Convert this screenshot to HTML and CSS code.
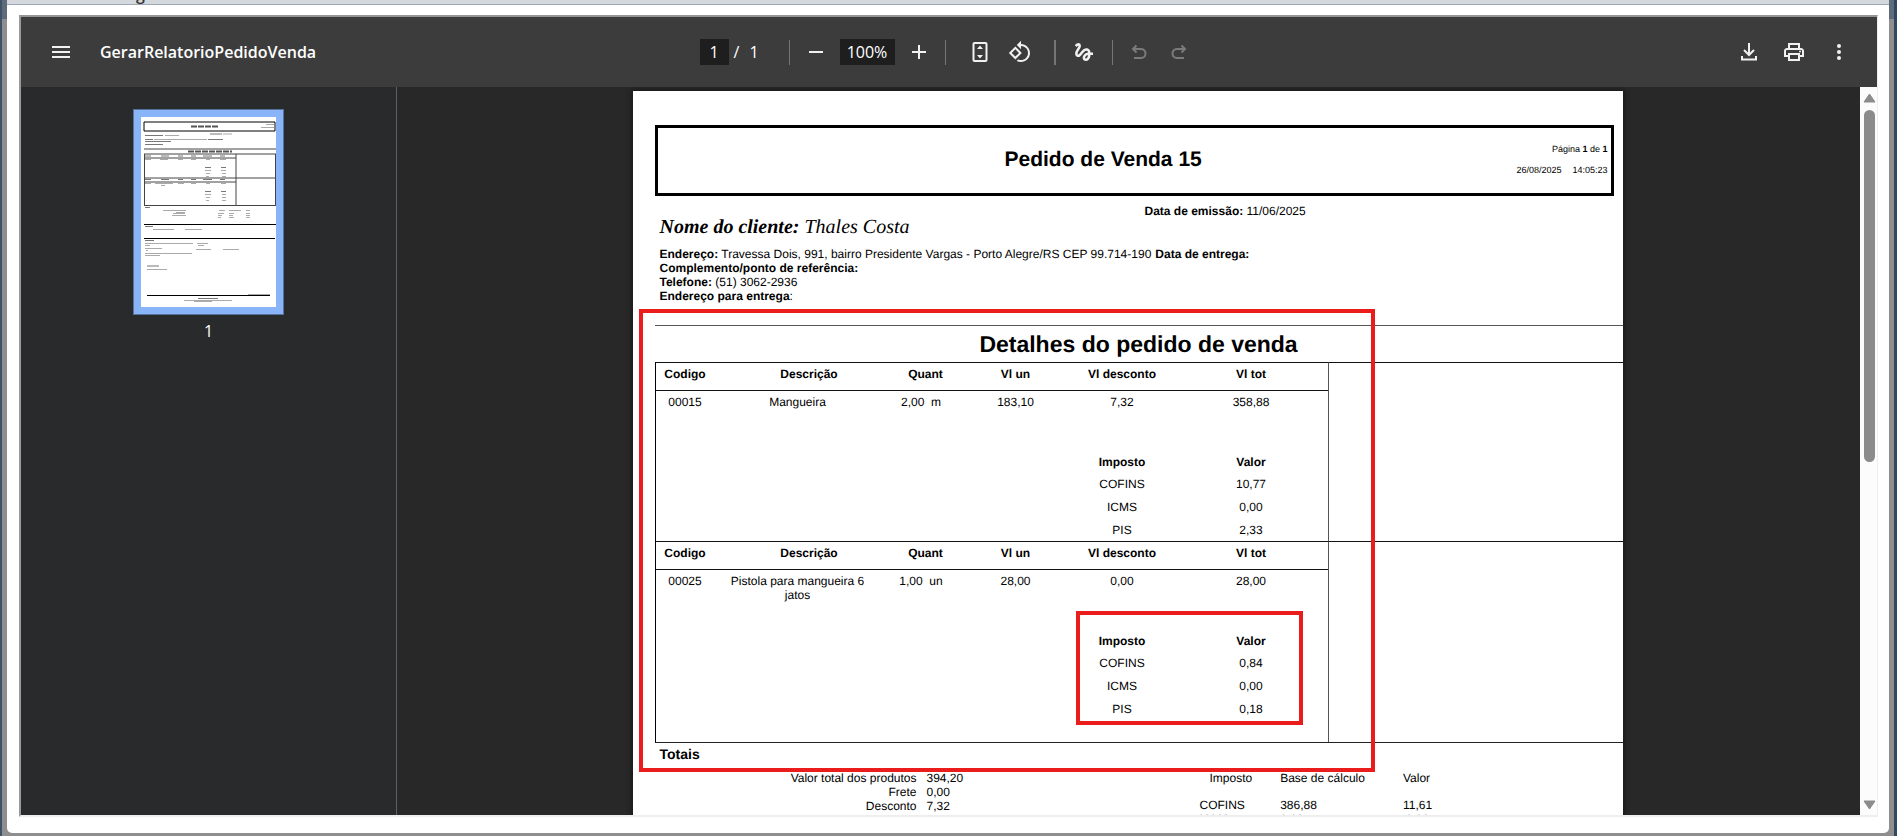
FILE: index.html
```html
<!DOCTYPE html>
<html lang="pt-BR">

<head>
    <meta charset="UTF-8">
    <meta name="viewport" content="width=device-width, initial-scale=1.0">
    <title>GerarRelatorioPedidoVenda</title>
    <link rel="stylesheet" href="styles.css">
</head>

<body>
    <div class="dialog">
        <div class="dialog-title"><span>g</span></div>
        <div class="pdf-frame">
            <header class="toolbar">
                <div class="toolbar-start">
                    <button type="button" class="icon-btn" aria-label="Menu">
                        <svg width="20" height="14" viewBox="0 0 20 14"><path d="M1 2h18M1 7h18M1 12h18" stroke-width="2"/></svg>
                    </button>
                    <h1 class="file-name">GerarRelatorioPedidoVenda</h1>
                </div>
                <div class="toolbar-center">
                    <div class="page-info">
                        <input type="text" class="page-input" value="1" aria-label="Página">
                        <span class="slash">/</span>
                        <span>1</span>
                    </div>
                    <span class="divider"></span>
                    <div class="tools">
                        <button type="button" class="icon-btn" aria-label="Diminuir zoom">
                            <svg width="14" height="14" viewBox="0 0 14 14"><path d="M0 7h14" stroke-width="2"/></svg>
                        </button>
                        <input type="text" class="zoom-input" value="100%" aria-label="Zoom">
                        <button type="button" class="icon-btn" aria-label="Aumentar zoom">
                            <svg width="14" height="14" viewBox="0 0 14 14"><path d="M0 7h14M7 0v14" stroke-width="2"/></svg>
                        </button>
                    </div>
                    <span class="divider"></span>
                    <div class="tools view-tools">
                        <button type="button" class="icon-btn" aria-label="Ajustar à página">
                            <svg width="16" height="22" viewBox="0 0 16 22"><rect x="1.500" y="2" width="13" height="18" rx="1" stroke-width="2"/><path class="fill" d="M8 4.500l3 3.500H5zM8 17.500l3-3.500H5z"/></svg>
                        </button>
                        <button type="button" class="icon-btn" aria-label="Girar">
                            <svg width="24" height="24" viewBox="0 0 24 24"><path class="fill" d="M7.34 6.41L.86 12.9l6.49 6.48 6.49-6.48-6.5-6.49zM3.69 12.9l3.66-3.66L11 12.9l-3.66 3.66-3.65-3.66zm15.67-6.26C17.61 4.88 15.3 4 13 4V.76L8.76 5 13 9.24V6c1.79 0 3.58.68 4.95 2.05 2.73 2.73 2.73 7.17 0 9.9C16.58 19.32 14.79 20 13 20c-.97 0-1.94-.21-2.84-.61l-1.49 1.49C10.02 21.62 11.51 22 13 22c2.3 0 4.61-.88 6.36-2.64 3.52-3.51 3.52-9.21 0-12.72z"/></svg>
                        </button>
                    </div>
                    <span class="divider thick"></span>
                    <button type="button" class="icon-btn wide" aria-label="Desenhar">
                        <svg width="24" height="24" viewBox="0 0 24 24"><path class="fill" d="M4.59 6.89c.7-.71 1.4-1.35 1.71-1.22.5.2 0 1.03-.3 1.52-.25.42-2.86 3.89-2.86 6.31 0 1.28.48 2.34 1.34 2.98.75.56 1.74.73 2.64.46 1.07-.31 1.95-1.4 3.06-2.77 1.21-1.49 2.83-3.44 4.08-3.44 1.63 0 1.65 1.01 1.76 1.79-3.78.64-5.38 3.67-5.38 5.37 0 1.7 1.44 3.09 3.21 3.09 1.63 0 4.29-1.33 4.69-6.1H21v-2.5h-2.47c-.15-1.65-1.09-4.2-4.03-4.2-2.25 0-4.18 1.91-4.94 2.84-.58.73-2.06 2.48-2.29 2.72-.25.3-.68.84-1.11.84-.45 0-.72-.83-.36-1.92.35-1.09 1.4-2.86 1.85-3.52.78-1.14 1.3-1.92 1.3-3.28C8.950 3.690 7.310 3 6.440 3 5.120 3 3.970 4 3.720 4.250c-.36.36-.66.66-.88.93l1.750 1.710zm9.290 11.660c-.31 0-.74-.26-.74-.72 0-.6.73-2.200 2.870-2.760-.3 2.690-1.430 3.480-2.130 3.480z"/></svg>
                    </button>
                    <span class="divider"></span>
                    <div class="tools">
                        <button type="button" class="icon-btn" aria-label="Desfazer" disabled>
                            <svg width="16" height="16" viewBox="0 0 16 16"><path d="M5.500 1.500L2 5l3.500 3.500M2 5h8c6 0 6 9 0 9H3" stroke-width="2"/></svg>
                        </button>
                        <button type="button" class="icon-btn" aria-label="Refazer" disabled>
                            <svg width="16" height="16" viewBox="0 0 16 16"><path d="M10.500 1.500L14 5l-3.500 3.500M14 5H6c-6 0-6 9 0 9h7" stroke-width="2"/></svg>
                        </button>
                    </div>
                </div>
                <div class="toolbar-end">
                    <button type="button" class="icon-btn" aria-label="Baixar">
                        <svg width="16" height="18" viewBox="0 0 16 18"><path d="M8 0v12M3 7l5 5 5-5M1 13v3.500h14V13" stroke-width="2"/></svg>
                    </button>
                    <button type="button" class="icon-btn" aria-label="Imprimir">
                        <svg width="24" height="24" viewBox="0 0 24 24"><path class="fill" d="M19 8h-1V3H6v5H5c-1.660 0-3 1.340-3 3v6h4v4h12v-4h4v-6c0-1.660-1.340-3-3-3zM8 5h8v3H8V5zm8 12v2H8v-4h8v2zm2-2v-2H6v2H4v-4c0-.55.45-1 1-1h14c.55 0 1 .45 1 1v4h-2z"/><circle class="fill" cx="18" cy="11.500" r="1"/></svg>
                    </button>
                    <button type="button" class="icon-btn" aria-label="Mais opções">
                        <svg width="4" height="16" viewBox="0 0 4 16"><g class="fill"><circle cx="2" cy="2" r="2"/><circle cx="2" cy="8" r="2"/><circle cx="2" cy="14" r="2"/></g></svg>
                    </button>
                </div>
            </header>

            <div class="content">
                <aside class="sidebar">
                    <a class="thumb" href="#pagina1" aria-label="Página 1">
                        <svg width="135" height="190" viewBox="0 0 135 190">
                            <path class="heavy" d="M3 5h131v9H3z"/>
                            <path class="heavy" d="M3 107.500h132M3 121.500h131M6 178.500h123"/>
                            <path class="rule" d="M3 32h132M3 37h132M3 41h92M3 61h132M3 65h92M3 88.500h132M3.500 37v51M95 37v51M134.500 37v51"/>
                            <path class="title" d="M50 9.500h28M47 34.500h44"/>
                            <path class="bold" d="M4 18.500h18M69 17h12M4 22.500h8M67 22.500h15M4 24.500h26M4 27.500h18M4 39h6M20 39h8M37 39h5M50 39h5M62 39h9M79 39h5M64 50.500h6M80 50.500h5M4 62.500h6M20 62.500h8M37 62.500h5M50 62.500h5M62 62.500h9M79 62.500h5M64 74.500h6M80 74.500h5M4 90.500h5M4 109.500h8M4 123.500h9M6 149h12M57 181.500h20"/>
                            <path class="text" d="M125 7.500h8M120 10.500h13M24 18.500h14M82 17h9M13 22.500h53M4 42.500h6M19 42.500h8M37 42.500h5M50 42.500h5M65 42.500h4M79 42.500h6M64 53.500h6M80 53.500h5M65 56.500h4M81 56.500h4M65 59.500h3M81 59.500h4M4 66.500h6M14 66.500h18M20 68.500h4M37 66.500h6M50 66.500h5M65 66.500h4M80 66.500h5M64 77.500h6M81 77.500h4M65 80.500h4M81 80.500h4M65 83.500h3M81 83.500h4M22 93.500h23M35 95.500h9M32 96.500h12M31 98.500h14M78 93.500h6M88 93.500h12M105 93.500h4M77 96.500h6M88 96.500h5M105 96.500h4M77 98.500h4M88 98.500h4M105 98.500h4M77 100.500h3M88 100.500h5M105 100.500h4M12 112.500h21M44 112.500h17M4 126.500h48M4 128.500h5M56 126.500h11M57 128.500h6M4 131.500h17M5 133.500h2M55 132.500h15M82 132.500h16M4 136.500h47M4 138.500h15M6 152.500h20M107 177.500h22M43 183.500h48M53 184.500h18"/>
                        </svg>
                    </a>
                    <span class="thumb-number">1</span>
                </aside>

                <main class="viewer">
                    <article class="page" id="pagina1">
                        <header class="report-header">
                            <h2>Pedido de Venda 15</h2>
                            <div class="report-meta">
                                <div>Página <b>1</b> de <b>1</b></div>
                                <div class="print-date"><span>26/08/2025</span><span>14:05:23</span></div>
                            </div>
                        </header>

                        <section class="client">
                            <div class="client-row">
                                <p class="client-name"><b>Nome do cliente:</b> Thales Costa</p>
                                <p><b>Data de emissão:</b> 11/06/2025</p>
                            </div>
                            <div class="client-row">
                                <div class="address">
                                    <p><b>Endereço:</b> Travessa Dois, 991, bairro Presidente Vargas - Porto Alegre/RS CEP 99.714-190</p>
                                    <p><b>Complemento/ponto de referência:</b></p>
                                    <p><b>Telefone:</b> (51) 3062-2936</p>
                                    <p><b>Endereço para entrega</b>:</p>
                                </div>
                                <p><b>Data de entrega:</b></p>
                            </div>
                        </section>

                        <h3 class="section-title">Detalhes do pedido de venda</h3>

                        <table class="items">
                            <colgroup>
                                <col class="c-code"><col class="c-desc"><col class="c-gap"><col class="c-qty">
                                <col class="c-unit"><col class="c-disc"><col class="c-total"><col>
                            </colgroup>
                            <tbody>
                                <tr class="head">
                                    <th>Codigo</th>
                                    <th class="desc-head" colspan="2">Descrição</th>
                                    <th>Quant</th>
                                    <th>Vl un</th>
                                    <th>Vl desconto</th>
                                    <th>Vl tot</th>
                                    <td class="rest" rowspan="6"></td>
                                </tr>
                                <tr class="item">
                                    <td>00015</td>
                                    <td class="desc">Mangueira</td>
                                    <td colspan="2">2,00&nbsp; m</td>
                                    <td>183,10</td>
                                    <td>7,32</td>
                                    <td>358,88</td>
                                </tr>
                                <tr class="tax-head"><td colspan="5"></td><th>Imposto</th><th>Valor</th></tr>
                                <tr class="tax"><td colspan="5"></td><td>COFINS</td><td>10,77</td></tr>
                                <tr class="tax"><td colspan="5"></td><td>ICMS</td><td>0,00</td></tr>
                                <tr class="tax"><td colspan="5"></td><td>PIS</td><td>2,33</td></tr>
                            </tbody>
                            <tbody>
                                <tr class="head">
                                    <th>Codigo</th>
                                    <th class="desc-head" colspan="2">Descrição</th>
                                    <th>Quant</th>
                                    <th>Vl un</th>
                                    <th>Vl desconto</th>
                                    <th>Vl tot</th>
                                    <td class="rest" rowspan="7"></td>
                                </tr>
                                <tr class="item">
                                    <td>00025</td>
                                    <td class="desc">Pistola para mangueira 6 jatos</td>
                                    <td colspan="2">1,00&nbsp; un</td>
                                    <td>28,00</td>
                                    <td>0,00</td>
                                    <td>28,00</td>
                                </tr>
                                <tr class="tax-head"><td colspan="5"></td><th>Imposto</th><th>Valor</th></tr>
                                <tr class="tax"><td colspan="5"></td><td>COFINS</td><td>0,84</td></tr>
                                <tr class="tax"><td colspan="5"></td><td>ICMS</td><td>0,00</td></tr>
                                <tr class="tax"><td colspan="5"></td><td>PIS</td><td>0,18</td></tr>
                                <tr class="tax-head"><td colspan="7"></td></tr>
                            </tbody>
                        </table>

                        <h4 class="totals-title">Totais</h4>
                        <section class="totals">
                            <dl class="sums">
                                <dt>Valor total dos produtos</dt><dd>394,20</dd>
                                <dt>Frete</dt><dd>0,00</dd>
                                <dt>Desconto</dt><dd>7,32</dd>
                                <dt>Valor total</dt><dd>386,88</dd>
                            </dl>
                            <table class="tax-totals">
                                <thead>
                                    <tr><th>Imposto</th><th>Base de cálculo</th><th>Valor</th></tr>
                                </thead>
                                <tbody>
                                    <tr><td>COFINS</td><td>386,88</td><td>11,61</td></tr>
                                    <tr><td>ICMS</td><td>0,00</td><td>0,00</td></tr>
                                </tbody>
                            </table>
                        </section>

                        <!-- red highlights drawn over the report -->
                        <div class="mark mark-details"></div>
                        <div class="mark mark-taxes"></div>
                    </article>
                </main>

                <div class="scrollbar">
                    <svg width="13" height="10" viewBox="0 0 13 10"><path d="M6.500 1L12 9H1z"/></svg>
                    <div class="scroll-track"><div class="scroll-thumb"></div></div>
                    <svg width="13" height="10" viewBox="0 0 13 10"><path d="M6.500 9L12 1H1z"/></svg>
                </div>
            </div>
        </div>
    </div>
</body>

</html>
```
FILE: styles.css
```css
* {
    box-sizing: border-box;
}

body {
    margin: 0;
    height: 100vh;
    overflow: hidden;
    padding: 0 5px 3px;
    border-left: 2px solid #3e5268;
    border-right: 3px solid #2f4760;
    background: linear-gradient(#5d6b7b 19px, #8e8e8e 19px);
    font-family: 'Open Sans', 'Noto Sans', sans-serif;
}

h1, h2, h3, h4, p, dl, dd {
    margin: 0;
}

.dialog {
    height: 100%;
    display: flex;
    flex-direction: column;
    background-color: #fff;
    border-radius: 0 0 5px 5px;
}

/* bottom edge of the dialog's title bar */
.dialog-title {
    height: 5px;
    flex: none;
    display: flex;
    align-items: flex-end;
    overflow: hidden;
    padding-left: 129px;
    background-color: #d4d7db;
    border-bottom: 1px solid #9ba8b6;
    color: #333;
    font-size: 16px;
    font-weight: 600;
    line-height: 20px;
}

.pdf-frame {
    flex: 1;
    min-height: 0;
    display: flex;
    flex-direction: column;
    margin: 10px 11px 16px 12px;
    border: 2px solid;
    border-color: #949694 #eee #eee #9a9a9a;
    border-right-width: 1px;
}

/* toolbar */
.toolbar {
    display: flex;
    align-items: center;
    height: 70px;
    flex: none;
    background-color: #3c3c3c;
    color: #fff;
}

.toolbar-start,
.toolbar-end {
    flex: 1;
    display: flex;
    align-items: center;
}

.toolbar-start {
    gap: 23px;
    padding-left: 24px;
}

.toolbar-end {
    justify-content: flex-end;
    gap: 13px;
    padding-right: 22px;
}

.file-name {
    font-size: 16px;
    font-weight: 600;
    line-height: 20px;
}

.toolbar-center {
    display: flex;
    align-items: center;
    padding-right: 6px;
}

.icon-btn {
    display: flex;
    align-items: center;
    justify-content: center;
    width: 32px;
    height: 32px;
    padding: 0;
    border: none;
    background: none;
    cursor: pointer;
}

.icon-btn.wide {
    width: 36px;
}

.icon-btn svg {
    fill: none;
    stroke: #f1f1f1;
}

.icon-btn .fill {
    fill: #f1f1f1;
    stroke: none;
}

.icon-btn:disabled svg {
    stroke: #7b7b7b;
}

.page-info {
    display: flex;
    align-items: center;
    width: 79px;
    font-size: 16px;
}

.slash {
    padding: 0 10px 0 5px;
}

.page-input,
.zoom-input {
    height: 26px;
    padding: 0;
    border: none;
    background-color: #1e1e1e;
    color: #fff;
    font-family: inherit;
    font-size: 16px;
    text-align: center;
}

.page-input {
    width: 29px;
}

.zoom-input {
    width: 55px;
}

.tools {
    display: flex;
    align-items: center;
    gap: 8px;
}

.view-tools {
    padding: 0 8px;
}

.divider {
    width: 1px;
    height: 25px;
    margin: 0 10px;
    background-color: #757575;
}

.divider.thick {
    width: 2px;
}

/* body of the viewer */
.content {
    flex: 1;
    min-height: 0;
    display: flex;
}

.sidebar {
    width: 376px;
    flex: none;
    display: flex;
    flex-direction: column;
    align-items: center;
    padding-top: 22px;
    background-color: #292a2b;
    border-right: 1px solid #5f5f5f;
    color: #fff;
}

.thumb {
    display: flex;
    padding: 7px;
    background-color: #8ab4f8;
    border: 1px solid #56719c;
}

.thumb svg {
    background-color: #fff;
    fill: none;
}

.thumb .heavy {
    stroke: #000;
}

.thumb .rule {
    stroke: #444;
}

.thumb .title {
    stroke: #555;
    stroke-width: 2;
    stroke-dasharray: 6 1;
}

.thumb .bold {
    stroke: #777;
}

.thumb .text {
    stroke: #aaa;
}

.thumb-number {
    margin-top: 6px;
    font-size: 16px;
    line-height: 20px;
}

.viewer {
    flex: 1;
    min-width: 0;
    overflow: hidden;
    display: flex;
    justify-content: center;
    align-items: flex-start;
    padding: 4px 2px 0 0;
    background-color: #282828;
}

.scrollbar {
    width: 17px;
    flex: none;
    display: flex;
    flex-direction: column;
    align-items: center;
    padding: 6px 0 5px 2px;
    background-color: #fcfcfc;
}

.scrollbar svg {
    flex: none;
    fill: #8b8b8b;
    stroke: #8b8b8b;
    stroke-linejoin: round;
}

.scroll-track {
    flex: 1;
    width: 11px;
    padding: 7px 0;
}

.scroll-thumb {
    height: 51.5%;
    border-radius: 6px;
    background-color: #8b8b8b;
}

/* report page, A4 at 120 dpi */
.page {
    position: relative;
    flex: none;
    width: 990px;
    min-height: 1400px;
    padding: 34px 0 0 22px;
    background-color: #fff;
    box-shadow: 0 0 5px 1px #161616;
    color: #000;
    font-family: 'Liberation Sans', Arial, sans-serif;
    font-size: 12px;
    line-height: 14px;
    text-rendering: geometricPrecision;
}

.report-header {
    display: flex;
    justify-content: space-between;
    align-items: center;
    height: 71px;
    margin-right: 9px;
    padding: 0 3px 2px 347px;
    border: 3px solid #000;
}

.report-header h2 {
    font-size: 21px;
    line-height: 24px;
}

.report-meta {
    display: grid;
    gap: 7px;
    font-size: 9px;
    text-align: right;
}

.print-date {
    display: flex;
    gap: 11px;
}

.client {
    padding: 8px 0 22px 5px;
}

.client-row {
    display: flex;
}

.client-row > :first-child {
    min-width: 485px;
}

.client-name {
    padding: 11px 0 8px;
    font-family: 'Liberation Serif', 'Times New Roman', serif;
    font-size: 20px;
    font-style: italic;
    line-height: 24px;
}

.address {
    padding-right: 4px;
}

.section-title {
    height: 37px;
    padding-top: 4px;
    border-top: 1px solid #555;
    font-size: 23px;
    line-height: 28px;
    text-align: center;
}

/* item table */
.items {
    width: 100%;
    table-layout: fixed;
    border-collapse: separate;
    border-spacing: 0;
    border-left: 1px solid #000;
    border-bottom: 1px solid #222;
    text-align: center;
}

.items th,
.items td {
    padding: 0;
}

.c-code { width: 59px; }
.c-desc { width: 166px; }
.c-gap { width: 9px; }
.c-qty { width: 72px; }
.c-unit { width: 108px; }
.c-disc { width: 105px; }
.c-total { width: 153px; }

.head {
    height: 28px;
}

.head > *,
.item > * {
    border-top: 1px solid #111;
}

.items .head th {
    padding-bottom: 5px;
}

.items .desc-head {
    padding-left: 14px;
}

.item {
    height: 60px;
    vertical-align: top;
}

.items .item td {
    padding-top: 4px;
}

.items .item .desc {
    padding-left: 12px;
    padding-right: 12px;
}

.items .rest {
    border-left: 1px solid #555;
}

.tax-head {
    height: 22px;
}

.items .tax-head th {
    padding-top: 2px;
}

.tax {
    height: 23px;
}

/* totals */
.totals-title {
    padding-left: 5px;
    font-size: 14px;
    line-height: 22px;
}

.totals {
    display: flex;
    padding-top: 6px;
}

.sums {
    display: grid;
    grid-template-columns: 262px 283px;
    column-gap: 10px;
    align-content: start;
}

.sums dt {
    text-align: right;
}

.tax-totals {
    margin-left: -10px;
    border-collapse: collapse;
    text-align: left;
    align-self: flex-start;
}

.tax-totals th {
    padding: 0 38px 13px 0;
    font-weight: normal;
}

.tax-totals td {
    padding: 0;
}

.tax-totals th:first-child {
    padding-left: 10px;
    padding-right: 28px;
}

.tax-totals th:last-child {
    padding-right: 0;
}

.tax-totals td:last-child {
    text-align: center;
}

.mark {
    position: absolute;
    border: 4px solid #ea1c1c;
}

.mark-details {
    left: 6px;
    top: 218px;
    width: 736px;
    height: 463px;
}

.mark-taxes {
    left: 443px;
    top: 520px;
    width: 227px;
    height: 114px;
}
```
